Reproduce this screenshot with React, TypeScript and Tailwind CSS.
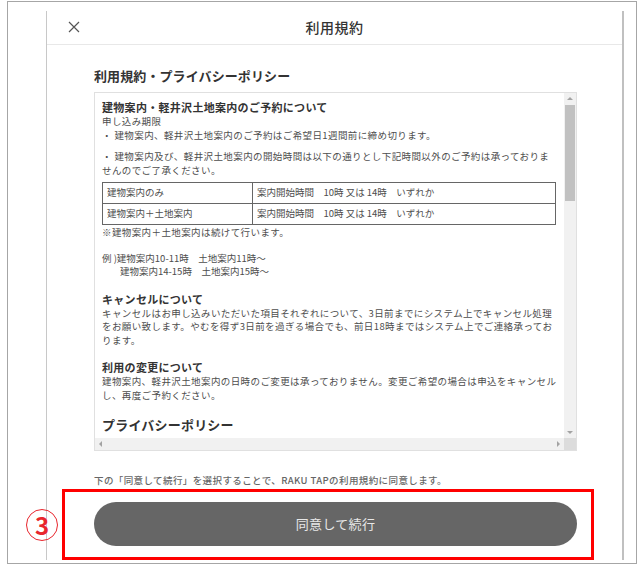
import React from 'react';

const body = 'whitespace-nowrap text-[9.5px] leading-[13.5px] tracking-[0.4px] text-[#4d4d4d]';
const head = 'whitespace-nowrap text-[11px] font-bold leading-[15px] tracking-[0.3px] text-[#333]';

function Arrow({ dir }: { dir: 'up' | 'down' | 'left' | 'right' }) {
  const pts = {
    up: '1,5 4,2 7,5',
    down: '1,3 4,6 7,3',
    left: '5,1 2,4 5,7',
    right: '3,1 6,4 3,7',
  }[dir];
  return (
    <svg width="8" height="8" viewBox="0 0 8 8">
      <polygon points={pts} fill="#a3a3a3" />
    </svg>
  );
}

function TermsBody() {
  return (
    <div className="pt-[7px] pl-[7px] pr-[8px]">
      <h3 className={head}>建物案内・軽井沢土地案内のご予約について</h3>
      <p className={body}>申し込み期限</p>
      <p className={body}>・ 建物案内、軽井沢土地案内のご予約はご希望日1週間前に締め切ります。</p>
      <p className={`${body} mt-[8px]`}>
        ・ 建物案内及び、軽井沢土地案内の開始時間は以下の通りとし下記時間以外のご予約は承っておりま
        <br />
        せんのでご了承ください。
      </p>

      <table className="mt-[5px] w-full border-collapse border border-[#666]">
        <tbody>
          <tr>
            <td className={`${body} h-[21px] w-[150px] border border-[#666] px-[4px] tracking-[0px]`}>建物案内のみ</td>
            <td className={`${body} h-[21px] border border-[#666] px-[4px] tracking-[0px]`}>案内開始時間　10時 又は 14時　いずれか</td>
          </tr>
          <tr>
            <td className={`${body} h-[21px] w-[150px] border border-[#666] px-[4px] tracking-[0px]`}>建物案内＋土地案内</td>
            <td className={`${body} h-[21px] border border-[#666] px-[4px] tracking-[0px]`}>案内開始時間　10時 又は 14時　いずれか</td>
          </tr>
        </tbody>
      </table>
      <p className={`${body} mt-[1px]`}>※建物案内＋土地案内は続けて行います。</p>

      <div className="mt-[12px]">
        <p className={`${body} tracking-[0px]`}>例 )建物案内10-11時　土地案内11時～</p>
        <p className={`${body} pl-[18px] tracking-[0px]`}>建物案内14-15時　土地案内15時～</p>
      </div>

      <h3 className={`${head} mt-[13px]`}>キャンセルについて</h3>
      <p className={body}>
        キャンセルはお申し込みいただいた項目それぞれについて、3日前までにシステム上でキャンセル処理
        <br />
        をお願い致します。やむを得ず3日前を過ぎる場合でも、前日18時まではシステム上でご連絡承ってお
        <br />
        ります。
      </p>

      <h3 className={`${head} mt-[13px]`}>利用の変更について</h3>
      <p className={body}>
        建物案内、軽井沢土地案内の日時のご変更は承っておりません。変更ご希望の場合は申込をキャンセル
        <br />
        し、再度ご予約ください。
      </p>

      <h2 className="mt-[14px] whitespace-nowrap text-[13px] font-bold leading-[17px] tracking-[0.2px] text-[#333]">
        プライバシーポリシー
      </h2>
    </div>
  );
}

export default function App() {
  return (
    <div className="relative h-[568px] w-[640px] bg-white font-['Noto_Sans_CJK_JP',sans-serif]">
      {/* screenshot frame */}
      <div className="ml-[7px] mt-[1px] h-[563px] w-[630px] border border-[#a6a6a6] pl-[38px] pr-[12px] pt-[9px] pb-[3px]">
        {/* modal */}
        <div className="flex h-full flex-col border-l border-r-2 border-l-[#c8c8c8] border-r-[#c0c0c0]">
          {/* header */}
          <div className="relative flex h-[34px] shrink-0 items-center justify-center border-b border-[#e8e8e8]">
            <button className="absolute left-[20px] top-[9px] flex h-[14px] w-[14px] items-center justify-center">
              <svg width="12" height="12" viewBox="0 0 12 12">
                <path d="M1 1L11 11M11 1L1 11" stroke="#555" strokeWidth="1.2" />
              </svg>
            </button>
            <span className="text-[14px] font-medium tracking-[0.5px] text-[#333]">利用規約</span>
          </div>

          <div className="flex flex-1 flex-col pl-[47px] pr-[45px] pt-[22px]">
            <h1 className="whitespace-nowrap text-[13px] font-bold leading-[17px] tracking-[0.1px] text-[#333]">
              利用規約・プライバシーポリシー
            </h1>

            {/* scroll box */}
            <div className="mt-[8px] flex h-[359px] flex-col border border-[#e0e0e0]">
              <div className="flex min-h-0 flex-1">
                <div className="min-w-0 flex-1 overflow-hidden">
                  <TermsBody />
                </div>
                <div className="flex w-[12px] shrink-0 flex-col bg-[#f1f1f1]">
                  <div className="flex h-[12px] items-center justify-center">
                    <Arrow dir="up" />
                  </div>
                  <div className="mx-[1px] h-[96px] bg-[#c1c1c1]" />
                  <div className="flex-1" />
                  <div className="flex h-[12px] items-center justify-center">
                    <Arrow dir="down" />
                  </div>
                </div>
              </div>
              <div className="flex h-[12px] shrink-0 bg-[#f1f1f1]">
                <div className="flex w-[12px] items-center justify-center">
                  <Arrow dir="left" />
                </div>
                <div className="flex-1" />
                <div className="flex w-[12px] items-center justify-center">
                  <Arrow dir="right" />
                </div>
                <div className="w-[12px] bg-[#dcdcdc]" />
              </div>
            </div>

            <p className="mt-[22px] whitespace-nowrap text-[9.5px] font-medium leading-[14px] tracking-[0.4px] text-[#666]">
              下の「同意して続行」を選択することで、RAKU TAPの利用規約に同意します。
            </p>

            <button className="mt-[15px] flex h-[44px] w-full items-center justify-center rounded-full bg-[#666]">
              <span className="text-[13px] tracking-[0.3px] text-[#e8e8e8]">同意して続行</span>
            </button>
          </div>
        </div>
      </div>

      {/* annotation overlay */}
      <div className="pointer-events-none absolute left-[62px] top-[488px] h-[71px] w-[532px] border-[3px] border-[#ff0000]" />
      <div className="pointer-events-none absolute left-[26px] top-[508px] flex h-[32px] w-[32px] items-center justify-center rounded-full border-[1.5px] border-[#e8262d]">
        <span className="text-[24px] font-bold leading-none text-[#e8262d]">3</span>
      </div>
    </div>
  );
}
